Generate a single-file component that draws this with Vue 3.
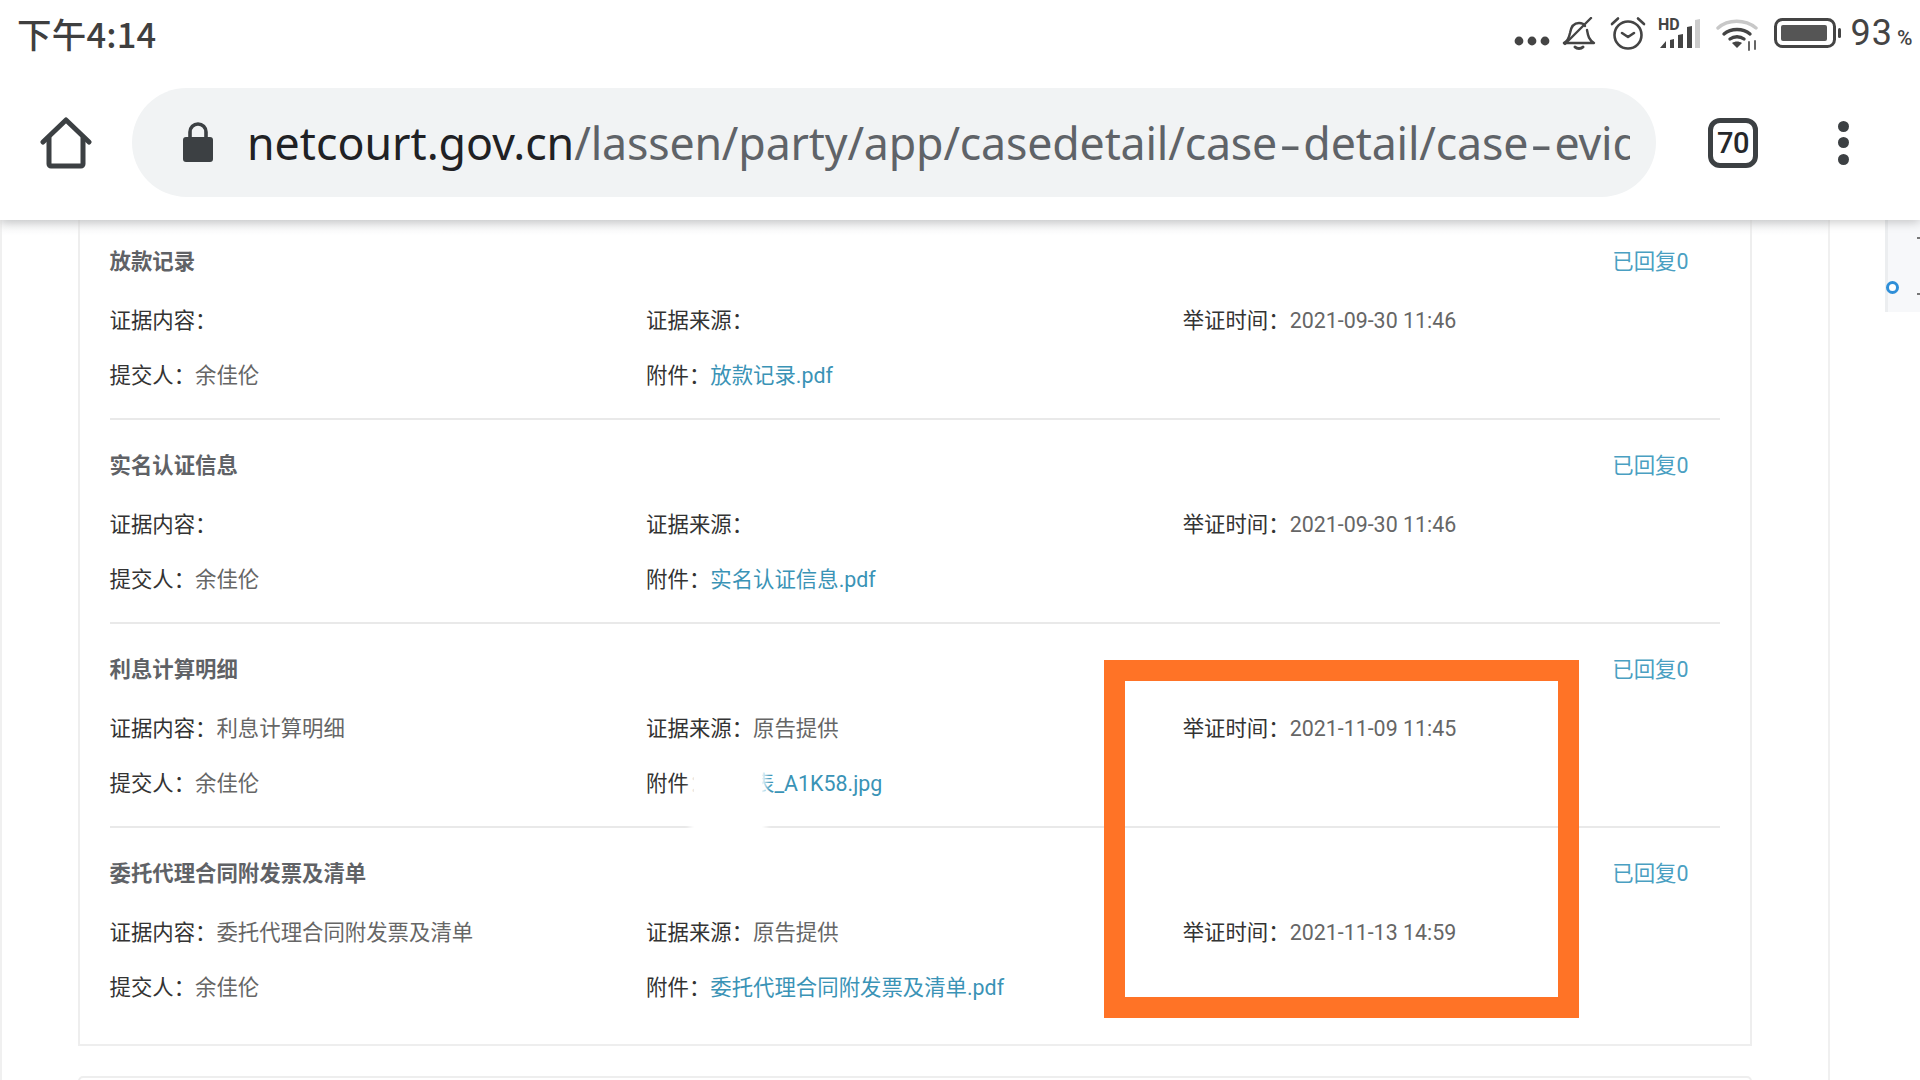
<script setup>
const rows = [
  { title: '放款记录', content: '', source: '', time: '2021-09-30 11:46', file: '放款记录.pdf' },
  { title: '实名认证信息', content: '', source: '', time: '2021-09-30 11:46', file: '实名认证信息.pdf' },
  { title: '利息计算明细', content: '利息计算明细', source: '原告提供', time: '2021-11-09 11:45', file: '明细表_A1K58.jpg' },
  { title: '委托代理合同附发票及清单', content: '委托代理合同附发票及清单', source: '原告提供', time: '2021-11-13 14:59', file: '委托代理合同附发票及清单.pdf' }
]
</script>

<template>
  <div class="screen">
    <header class="chrome">
      <div class="status">
        <span class="clock">下午4:14</span>
        <div class="status-icons">
          <svg class="i-dots" width="36" height="10" viewBox="0 0 36 10"><circle cx="5" cy="5" r="4.4"/><circle cx="18" cy="5" r="4.4"/><circle cx="31" cy="5" r="4.4"/></svg>
          <svg class="i-bell" width="34" height="33" viewBox="0 0 34 33" fill="none" stroke="#444" stroke-width="2.4" stroke-linejoin="round" stroke-linecap="round"><path d="M2 26c4-2 5-5 6-10 1-6 4-10 9-10 3 0 5 1 6 3"/><path d="M25 13c1 6 2 10 7 13H2"/><path d="M3 27 29 1"/><path d="M13 30c2 2 6 2 8 0" stroke-width="3"/></svg>
          <svg class="i-alarm" width="36" height="34" viewBox="0 0 36 34" fill="none" stroke="#444" stroke-width="2.6" stroke-linecap="round" stroke-linejoin="round"><circle cx="18" cy="19" r="13.5"/><path d="M12 17l6 4 6-4"/><path d="M2 8l6-5.500M34 8l-6-5.500"/></svg>
          <svg class="i-signal" width="42" height="32" viewBox="0 0 42 32"><text x="0" y="13" font-size="16" font-weight="700" font-family="Roboto, sans-serif" fill="#444">HD</text><path fill="#444" d="M2 31l6-7v7zM12 31V23l4-1v9zM20 31V18l5-1v14zM29 31V10l5-1v22z"/><path fill="#ccc" d="M37 31V3l5-1v29z"/></svg>
          <svg class="i-wifi" width="44" height="33" viewBox="0 0 44 33" fill="none" stroke-linecap="round"><path d="M2 10C12 1 29 1 40 10" stroke="#c8c8c8" stroke-width="3.400"/><path d="M8 16c7-6 19-6 26 0" stroke="#444" stroke-width="3.400"/><path d="M14 21c4-3 10-3 14 0" stroke="#444" stroke-width="3.400"/><path d="M21 30l-5-5c3-2 7-2 10 0z" fill="#444"/><path d="M33 24v8M39 23v8" stroke="#555" stroke-width="1.800"/></svg>
          <svg class="i-battery" width="68" height="30" viewBox="0 0 68 30"><rect x="1.500" y="1.500" width="59" height="27" rx="7" fill="none" stroke="#444" stroke-width="3"/><rect x="7" y="7" width="46" height="16" rx="2" fill="#555"/><rect x="64" y="10" width="3" height="10" rx="1.500" fill="#444"/></svg>
          <span class="pct">93<small>%</small></span>
        </div>
      </div>
      <div class="toolbar">
        <svg class="home" width="52" height="52" viewBox="0 0 52 52" fill="none" stroke="#3c4043" stroke-width="5" stroke-linejoin="round" stroke-linecap="round"><path d="M3 25 26 3l23 22"/><path d="M9 21v26a2 2 0 0 0 2 2h30a2 2 0 0 0 2-2V21"/></svg>
        <div class="pill">
          <svg class="lock" width="32" height="40" viewBox="0 0 32 40"><path d="M8 17v-7a8 8 0 0 1 16 0v7" fill="none" stroke="#3c4043" stroke-width="3.600"/><rect x="1" y="15" width="30" height="25" rx="3" fill="#3c4043"/></svg>
          <div class="url"><span class="host">netcourt.gov.cn</span><span class="path">/lassen/party/app/casedetail/case<span class="dash">-</span>detail/case<span class="dash">-</span>evidence</span></div>
        </div>
        <span class="tabs">70</span>
        <div class="menu"><i></i><i></i><i></i></div>
      </div>
    </header>

    <main class="page">
      <section class="card">
        <article v-for="r in rows" :key="r.title" class="row">
          <div class="head">
            <h3>{{ r.title }}</h3>
            <a class="reply">已回复0</a>
          </div>
          <div class="fields">
            <div><span class="lab">证据内容：</span><span class="val">{{ r.content }}</span></div>
            <div><span class="lab">证据来源：</span><span class="val">{{ r.source }}</span></div>
            <div><span class="lab">举证时间：</span><span class="val">{{ r.time }}</span></div>
            <div><span class="lab">提交人：</span><span class="val">余佳伦</span></div>
            <div><span class="lab">附件：</span><a class="link">{{ r.file }}</a></div>
          </div>
        </article>
      </section>
      <section class="card next"></section>
    </main>

    <div class="redact"></div>
    <div class="mark"></div>
    <aside class="float"><i></i><b class="tick one"></b><b class="tick two"></b></aside>
  </div>
</template>

<style>
html, body { margin: 0; background: #fff; }
</style>

<style scoped>
.screen {
  position: relative;
  width: 1920px;
  height: 1080px;
  overflow: hidden;
  background: #fff;
  display: flex;
  flex-direction: column;
  font-family: Roboto, "Noto Sans CJK SC", sans-serif;
}
.chrome {
  position: relative;
  z-index: 3;
  height: 220px;
  flex: none;
  background: #fff;
  box-shadow: 0 2px 10px rgba(0, 0, 0, .22);
}
.status {
  height: 66px;
  display: flex;
  align-items: center;
  justify-content: space-between;
  padding: 0 6.500px 0 17px;
}
.clock {
  font-size: 34.500px;
  font-weight: 500;
  color: #3f3f3f;
  font-family: "Noto Sans CJK SC", sans-serif;
  letter-spacing: .2px;
  margin-top: -1px;
}
.status-icons { display: flex; align-items: center; }
.status-icons svg { fill: #444; display: block; }
.i-dots { margin: 16px 12px 0 0; }
.i-bell { margin: 0 14px 0 0; fill: none !important; }
.i-alarm { margin: 0 12px 0 0; fill: none !important; }
.i-signal { margin: 0 16px 0 0; }
.i-wifi { margin: 2px 14px 0 0; fill: none !important; }
.i-battery { margin: 0 8.500px 0 0; }
.pct { font-size: 36px; color: #444; letter-spacing: 1px; line-height: 1; }
.pct small { font-size: 21px; font-weight: 500; margin-left: 4px; }
.toolbar {
  height: 109px;
  margin-top: 22px;
  display: flex;
  align-items: center;
}
.home { margin-left: 40px; flex: none; }
.pill {
  margin-left: 40px;
  width: 1524px;
  height: 109px;
  border-radius: 55px;
  background: #f1f3f4;
  display: flex;
  align-items: center;
  flex: none;
  box-sizing: border-box;
  padding: 0 26px 0 50px;
}
.lock { flex: none; margin-top: -2px; }
.url {
  margin-left: 33px;
  flex: 1;
  overflow: hidden;
  white-space: nowrap;
  font-family: "Noto Sans", sans-serif;
  font-size: 44.700px;
  color: #5f6368;
  margin-top: -1px;
}
.host { color: #202124; }
.path { letter-spacing: -.17px; }
.dash {
  display: inline-block;
  margin: 0 6px;
  transform: scaleX(1.5);
}
.tabs {
  margin-left: 52px;
  width: 50px;
  height: 50px;
  box-sizing: border-box;
  border: 5px solid #3c4043;
  border-radius: 12px;
  display: flex;
  align-items: center;
  justify-content: center;
  font-size: 29px;
  font-weight: 500;
  color: #26282b;
  flex: none;
  letter-spacing: -.5px;
}
.menu {
  margin-left: 80px;
  display: flex;
  flex-direction: column;
  gap: 5.500px;
}
.menu i { width: 11px; height: 11px; border-radius: 50%; background: #3c4043; display: block; }
.page {
  flex: 1;
  min-height: 0;
  box-sizing: border-box;
  width: 1830px;
  padding-left: 75.500px;
  border-left: 2px solid #f0f0f0;
  border-right: 2px solid #f0f0f0;
  position: relative;
  background: linear-gradient(#f4f5f6, #fff 16px);
}
.card {
  width: 1674px;
  box-sizing: border-box;
  border: 2px solid #eeeeee;
  border-top: 0;
  padding: 0 30px 14px 30px;
  background: linear-gradient(#f4f5f6, #fff 16px);
}
.card.next {
  margin-top: 30px;
  height: 60px;
  border-top: 2px solid #eee;
  border-radius: 5px 5px 0 0;
  background: #fff;
}
.row {
  height: 204px;
  box-sizing: border-box;
  padding-top: 15.500px;
  border-bottom: 2px solid #e9e9e9;
}
.row:first-child { height: 200px; padding-top: 11.500px; }
.row:last-child { border-bottom: 0; height: 202px; }
.head {
  height: 55px;
  margin-bottom: 4px;
  display: flex;
  align-items: center;
  justify-content: space-between;
}
h3 {
  margin: 0;
  font-size: 21.400px;
  font-weight: 700;
  color: #606266;
  font-family: "Noto Sans CJK SC", sans-serif;
}
.reply { font-size: 21.400px; color: #4a9fc2; margin-right: 31px; }
.fields {
  display: grid;
  grid-template-columns: repeat(3, 536.6px);
  grid-auto-rows: 55px;
  align-items: center;
  font-size: 21.400px;
}
.lab { color: #333; }
.val { color: #666; }
.link { color: #3a93b6; }
.redact {
  position: absolute;
  left: 694px;
  top: 762px;
  width: 68px;
  height: 72px;
  background: #fff;
  box-shadow: 0 0 6px 4px #fff;
}
.mark {
  position: absolute;
  left: 1104px;
  top: 660px;
  width: 475px;
  height: 358px;
  box-sizing: border-box;
  border: solid #ff7326;
  border-width: 21px;
}
.float {
  position: absolute;
  z-index: 2;
  right: 0;
  top: 220px;
  width: 35px;
  height: 92px;
  background: #f7f8fa;
  border-left: 3px solid #eceef0;
  box-sizing: border-box;
}
.float i {
  position: absolute;
  left: -2px;
  top: 61px;
  width: 13px;
  height: 13px;
  box-sizing: border-box;
  border: 3px solid #2f8fd8;
  border-radius: 50%;
  background: #fff;
}
.tick {
  position: absolute;
  right: 0;
  width: 3px;
  height: 2px;
  background: #777;
}
.tick.one { top: 17px; }
.tick.two { top: 73px; }
</style>
